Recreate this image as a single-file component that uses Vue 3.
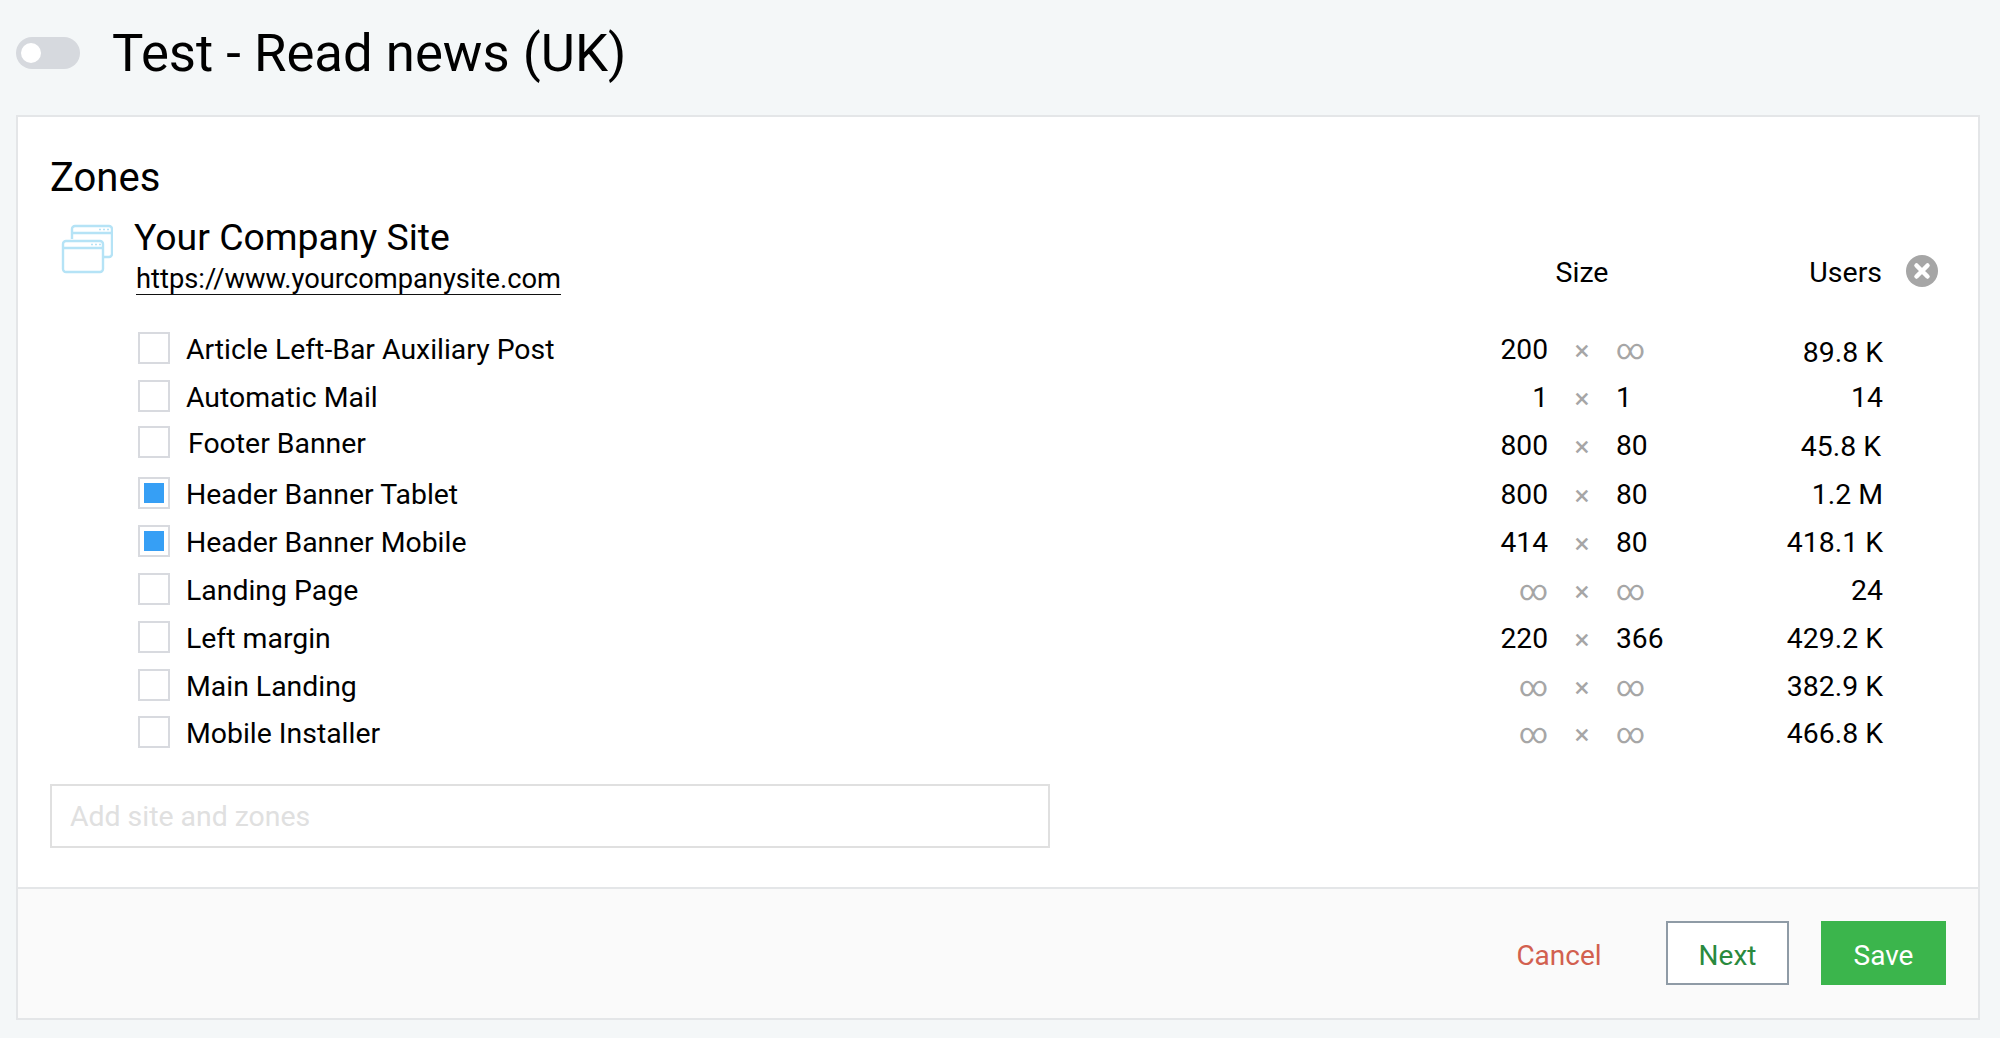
<script setup>
const zones = [
  { name: 'Article Left-Bar Auxiliary Post', w: '200', h: '∞', users: '89.8 K', cls: 'r-first' },
  { name: 'Automatic Mail', w: '1', h: '1', users: '14', cls: 'r-auto' },
  { name: 'Footer Banner', w: '800', h: '80', users: '45.8 K', cls: 'r-footer' },
  { name: 'Header Banner Tablet', w: '800', h: '80', users: '1.2 M', on: true, cls: '' },
  { name: 'Header Banner Mobile', w: '414', h: '80', users: '418.1 K', on: true, cls: '' },
  { name: 'Landing Page', w: '∞', h: '∞', users: '24', cls: '' },
  { name: 'Left margin', w: '220', h: '366', users: '429.2 K', cls: '' },
  { name: 'Main Landing', w: '∞', h: '∞', users: '382.9 K', cls: 'r-main' },
  { name: 'Mobile Installer', w: '∞', h: '∞', users: '466.8 K', cls: '' }
]
const inf = (v) => v === '∞'
</script>

<template>
  <div class="page">
    <header class="top">
      <span class="toggle"><span class="knob"></span></span>
      <h1 class="title">Test - Read news (UK)</h1>
    </header>
    <section class="card">
      <div class="body">
        <h2 class="zones">Zones</h2>
        <div class="site">
          <svg class="site-icon" width="52" height="50" viewBox="0 0 52 50" fill="none" stroke="#b5e3f6" stroke-width="2.4">
            <path d="M11 15V5a3 3 0 0 1 3-3h34a3 3 0 0 1 3 3v25a3 3 0 0 1-3 3h-6" />
            <path d="M11 9h40" />
            <rect x="2" y="17" width="40" height="31" rx="3" />
            <path d="M2 24h40" />
            <path d="M38 5.5h2M42 5.5h2M46 5.5h2M30 20.5h2M34 20.5h2M38 20.5h2" stroke-width="1.5" />
          </svg>
          <div class="site-text">
            <div class="site-name">Your Company Site</div>
            <a class="site-url">https://www.yourcompanysite.com</a>
          </div>
          <div class="site-size">Size</div>
          <div class="site-users">Users</div>
          <svg class="close" width="32" height="32" viewBox="0 0 32 32">
            <circle cx="16" cy="16" r="16" fill="#a6a6a6" />
            <path d="M10.5 10.5l11 11M21.5 10.5l-11 11" stroke="#fff" stroke-width="4.5" stroke-linecap="round" />
          </svg>
        </div>
        <ul class="rows">
          <li v-for="z in zones" :key="z.name" class="row" :class="z.cls">
            <span class="check"><span v-if="z.on" class="mark"></span></span>
            <span class="name">{{ z.name }}</span>
            <span class="w" :class="{ inf: inf(z.w) }">{{ z.w }}</span>
            <span class="x">×</span>
            <span class="h" :class="{ inf: inf(z.h) }">{{ z.h }}</span>
            <span class="users">{{ z.users }}</span>
          </li>
        </ul>
        <input class="add" type="text" placeholder="Add site and zones" />
      </div>
      <footer class="foot">
        <button class="btn cancel">Cancel</button>
        <button class="btn next">Next</button>
        <button class="btn save">Save</button>
      </footer>
    </section>
  </div>
</template>

<style>
html, body { margin: 0; background: #f4f7f8; }
</style>

<style scoped>
.page {
  height: 1038px;
  box-sizing: border-box;
  padding: 0 20px 0 16px;
  font-family: Roboto, sans-serif;
  color: #000;
  background: #f4f7f8;
  overflow: hidden;
}
.top {
  height: 115px;
  display: flex;
  align-items: center;
  padding-bottom: 10px;
  box-sizing: border-box;
}
.toggle {
  width: 64px;
  height: 32px;
  border-radius: 16px;
  background: #d6d9de;
  display: flex;
  align-items: center;
  padding-left: 5px;
  box-sizing: border-box;
}
.knob {
  width: 20px;
  height: 20px;
  border-radius: 50%;
  background: #fff;
}
.title {
  margin: 2px 0 0 32px;
  font-size: 52.7px;
  font-weight: 400;
  line-height: 1;
}
.card {
  border: 2px solid #e4e6e8;
  background: #fff;
  height: 905px;
  box-sizing: border-box;
  display: flex;
  flex-direction: column;
}
.body {
  flex: 1;
  padding: 39px 0 0 32px;
}
.zones {
  margin: 0;
  font-size: 40px;
  font-weight: 400;
  line-height: 44px;
}
.site {
  display: flex;
  align-items: flex-start;
  height: 113px;
  margin-top: 15px;
}
.site-icon {
  margin: 9px 0 0 11px;
  flex: none;
}
.site-text {
  margin-left: 21px;
}
.site-name {
  font-size: 37.4px;
  line-height: 44px;
}
.site-url {
  display: inline-block;
  font-size: 27.3px;
  line-height: 30px;
  padding-top: 6px;
  margin-top: -1px;
  border-bottom: 1px solid #111;
  margin-left: 2px;
}
.site-size {
  margin: 40px 0 0 auto;
  width: 134px;
  text-align: center;
  font-size: 28.5px;
  line-height: 36px;
}
.site-users {
  margin-top: 40px;
  width: 233px;
  text-align: right;
  font-size: 28.5px;
  line-height: 36px;
}
.close {
  flex: none;
  margin: 40px 40px 0 24px;
}
.rows {
  list-style: none;
  margin: 0;
  padding: 0;
}
.row {
  display: grid;
  grid-template-columns: 32px 1278px 100px 68px 117px 150px;
  align-items: center;
  height: 32px;
  margin-bottom: 16px;
  margin-left: 88px;
  font-size: 28px;
}
.check {
  width: 32px;
  height: 32px;
  box-sizing: border-box;
  border: 2px solid #d8dadf;
  display: flex;
  align-items: center;
  justify-content: center;
}
.mark {
  width: 20px;
  height: 20px;
  background: #369ff5;
}
.name { padding: 3px 0 0 16px; font-size: 28.4px; }
.w { text-align: right; padding-top: 3px; font-size: 28.2px; }
.x { text-align: center; color: #a6a6a6; padding-top: 6px; }
.h { padding-top: 3px; font-size: 28.2px; }
.users { text-align: right; padding-top: 3px; font-size: 28.4px; }
.inf { color: #a6a6a6; }
.r-auto { margin-bottom: 13px; }
.r-footer { margin-bottom: 20px; }
.r-main { margin-bottom: 15px; }
.r-footer .name { padding-left: 18px; }
.r-footer .w, .r-footer .h { padding-top: 6px; }
.r-footer .x { padding-top: 9px; }
.r-footer .users { position: relative; left: -2px; top: 3px; }
.r-first .users { position: relative; top: 3px; }
.add {
  display: block;
  width: 1000px;
  height: 64px;
  box-sizing: border-box;
  border: 2px solid #e0e0e0;
  margin-top: 40px;
  padding: 0 18px;
  font: 28.4px Roboto, sans-serif;
  outline: none;
}
.add::placeholder { color: #e0e0e0; opacity: 1; }
.foot {
  height: 131px;
  box-sizing: border-box;
  border-top: 2px solid #e4e6e8;
  background: #fafafa;
  display: flex;
  justify-content: flex-end;
  align-items: flex-start;
  padding: 32px 32px 0 0;
}
.btn {
  height: 64px;
  box-sizing: border-box;
  font: 28px Roboto, sans-serif;
  border: none;
  background: none;
  padding: 5px 0 0;
}
.cancel { color: #d2604f; width: 86px; margin-right: 64px; }
.next { color: #2a8a3e; width: 123px; border: 2px solid #8f9ba6; background: #fff; margin-right: 32px; }
.save { color: #fff; width: 125px; background: #3bb54c; }
</style>
